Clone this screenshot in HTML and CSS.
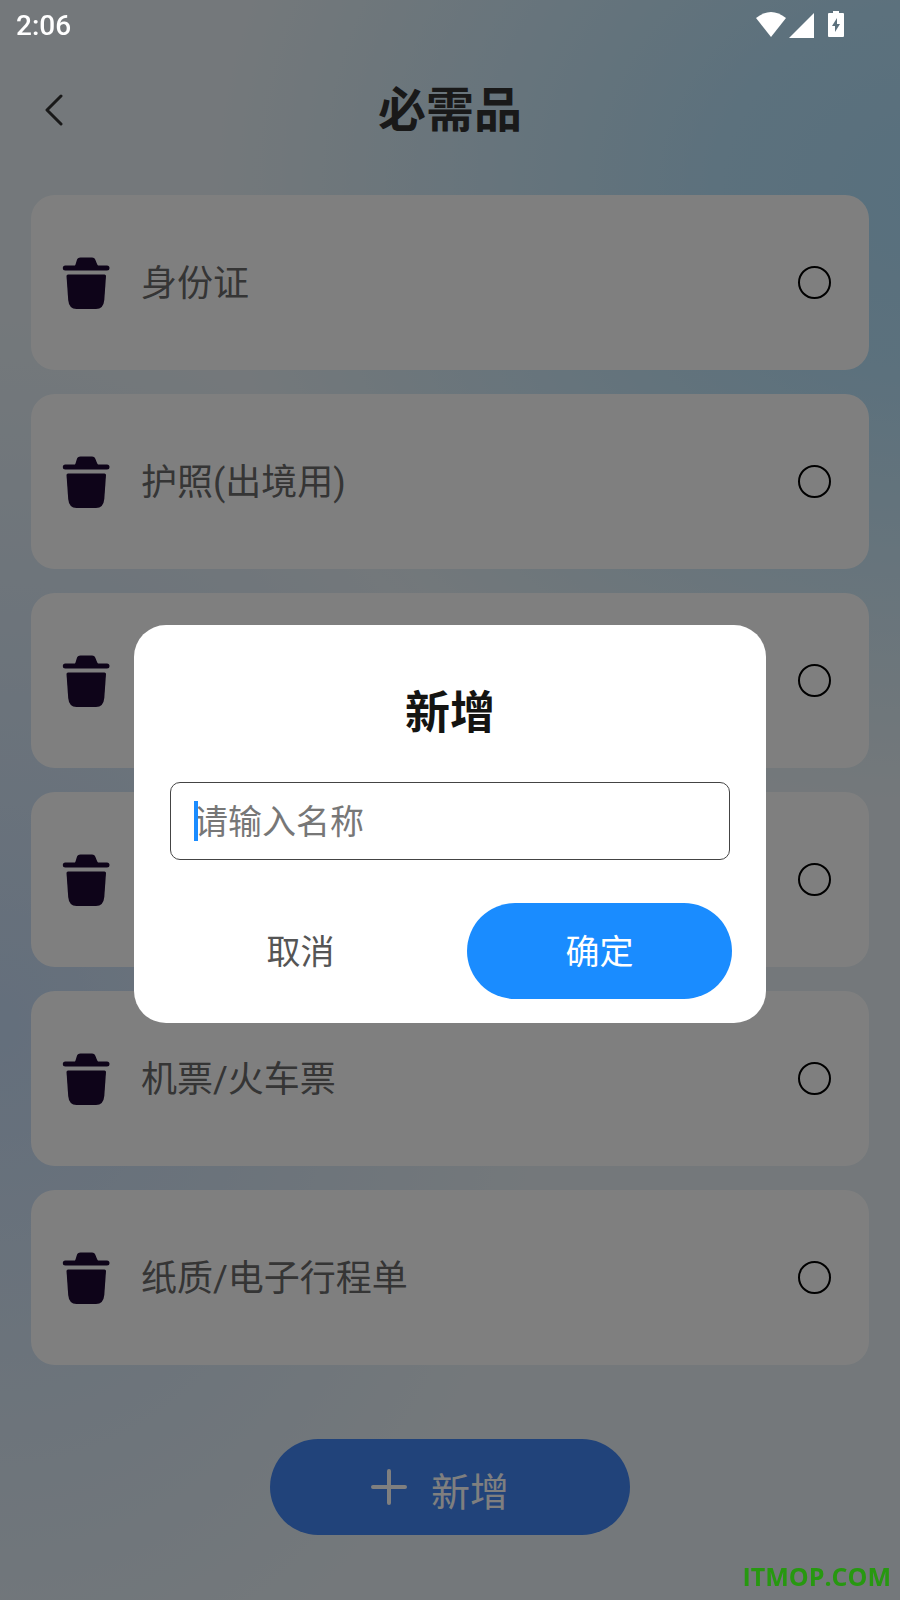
FILE: index.html
```
<!DOCTYPE html>
<html lang="zh-CN">

<head>
    <meta charset="utf-8">
    <meta name="viewport" content="width=device-width, initial-scale=1.0">
    <title>必需品</title>
    <link rel="stylesheet" href="styles.css">
</head>

<body>
    <svg width="0" height="0" class="sprite">
        <symbol id="trash" viewBox="0 0 48 52">
            <path d="M13 8.500C15 5 14 0.500 18.500 0.500H30C34 0.500 33.500 5 36 8.500H45a2.300 2.300 0 0 1 0 5H3.300a2.300 2.300 0 0 1 0-5z" />
            <path d="M6 17.500H42.500a1.500 1.500 0 0 1 1.500 1.500L42.300 43Q41.500 52 34 52H14.500Q7 52 6.200 43L4.500 19a1.500 1.500 0 0 1 1.500-1.500z" />
        </symbol>
    </svg>
    <div class="status-bar">
        <span>2:06</span>
        <svg class="status-icons" width="90" height="28" viewBox="0 0 90 28" fill="#fff">
            <path d="M0 7Q15-5 30 7L15 26z" />
            <path d="M58 2V27H33z" />
            <path fill-rule="evenodd" d="M77 0h6v2h4q1 0 1 1V25q0 1-1 1H73q-1 0-1-1V3q0-1 1-1h4zM81 7l-5 8h3v6l5-8h-3z" />
        </svg>
    </div>
    <div class="page">
        <header class="header">
            <button class="back-button" aria-label="返回">
                <svg width="18" height="32" viewBox="0 0 18 32"><path d="M16 2L2 16L16 30" /></svg>
            </button>
            <h1>必需品</h1>
        </header>
        <ul class="list">
            <li class="item">
                <button class="delete-button" aria-label="删除"><svg><use href="#trash" /></svg></button>
                <label class="item-name" for="item1">身份证</label>
                <input class="item-check" type="checkbox" id="item1">
            </li>
            <li class="item">
                <button class="delete-button" aria-label="删除"><svg><use href="#trash" /></svg></button>
                <label class="item-name" for="item2">护照(出境用)</label>
                <input class="item-check" type="checkbox" id="item2">
            </li>
            <li class="item">
                <button class="delete-button" aria-label="删除"><svg><use href="#trash" /></svg></button>
                <label class="item-name" for="item3"></label>
                <input class="item-check" type="checkbox" id="item3">
            </li>
            <li class="item">
                <button class="delete-button" aria-label="删除"><svg><use href="#trash" /></svg></button>
                <label class="item-name" for="item4"></label>
                <input class="item-check" type="checkbox" id="item4">
            </li>
            <li class="item">
                <button class="delete-button" aria-label="删除"><svg><use href="#trash" /></svg></button>
                <label class="item-name" for="item5">机票/火车票</label>
                <input class="item-check" type="checkbox" id="item5">
            </li>
            <li class="item">
                <button class="delete-button" aria-label="删除"><svg><use href="#trash" /></svg></button>
                <label class="item-name" for="item6">纸质/电子行程单</label>
                <input class="item-check" type="checkbox" id="item6">
            </li>
        </ul>
        <button class="add-button">
            <svg width="36" height="36" viewBox="0 0 36 36"><path d="M18 2V34M2 18H34" /></svg>
            <span>新增</span>
        </button>
    </div>
    <div class="overlay">
        <form class="dialog" role="dialog" aria-labelledby="dialog_title">
            <h2 id="dialog_title">新增</h2>
            <div class="name-box">
                <input class="name-input" type="text" placeholder="请输入名称" aria-label="请输入名称">
                <span class="caret"></span>
            </div>
            <div class="dialog-buttons">
                <button class="cancel-button" type="button">取消</button>
                <button class="confirm-button" type="button">确定</button>
            </div>
        </form>
    </div>
    <div class="watermark">ITMOP.COM</div>
</body>

</html>
```

FILE: styles.css
```
* {
    box-sizing: border-box;
}

body {
    margin: 0;
    min-height: 100vh;
    font-family: Roboto, "Noto Sans CJK SC", sans-serif;
    background:
        radial-gradient(ellipse 80% 38% at 104% 12%, #b0e0fc 0%, #b8e2fa 30%, rgba(200, 228, 250, 0) 100%),
        radial-gradient(ellipse 60% 44% at 0% 64%, #c8def8 0%, rgba(208, 226, 250, 0) 100%),
        #e8f1f6;
}

h1, h2, ul {
    margin: 0;
    padding: 0;
}

button {
    border: none;
    padding: 0;
    background: none;
    font-family: inherit;
    cursor: pointer;
}

.sprite {
    position: absolute;
}

.status-bar {
    position: relative;
    z-index: 2;
    display: flex;
    justify-content: space-between;
    align-items: center;
    height: 48px;
    padding: 2px 54px 0 16px;
    color: white;
    font-size: 28px;
    font-weight: 500;
}

.page {
    padding: 0 31px 65px;
}

.header {
    display: grid;
    grid-template-columns: 48px 1fr 48px;
    align-items: center;
    height: 123px;
    margin-bottom: 24px;
}

.header h1 {
    padding-top: 2px;
    color: #333;
    font-size: 48px;
    line-height: 64px;
    text-align: center;
}

.back-button {
    display: flex;
    height: 48px;
    padding: 0 14px;
    align-items: center;
}

.back-button svg {
    fill: none;
    stroke: #333;
    stroke-width: 3;
    stroke-linecap: round;
    stroke-linejoin: round;
}

.list {
    display: flex;
    flex-direction: column;
    gap: 24px;
    list-style: none;
}

.item {
    display: flex;
    align-items: center;
    gap: 31px;
    height: 175px;
    padding: 0 38px 0 31px;
    border-radius: 24px;
    background: white;
}

.delete-button,
.delete-button svg {
    display: block;
    width: 48px;
    height: 52px;
    fill: #1c0832;
}

.item-name {
    flex: 1;
    padding-top: 2px;
    color: #6a6a6a;
    font-size: 36px;
    line-height: 48px;
}

.item-check {
    appearance: none;
    width: 33px;
    height: 33px;
    margin: 0;
    border: 2px solid black;
    border-radius: 50%;
}

.add-button {
    display: flex;
    justify-content: center;
    align-items: center;
    gap: 24px;
    width: 360px;
    max-width: 100%;
    height: 96px;
    margin: 74px auto 0;
    padding-right: 20px;
    border-radius: 48px;
    background: #4286f4;
    color: white;
    font-size: 39px;
    line-height: 48px;
}

.add-button span {
    padding-top: 12px;
}

.add-button svg {
    stroke: white;
    stroke-width: 4;
    stroke-linecap: round;
}

.overlay {
    position: fixed;
    inset: 0;
    z-index: 1;
    display: flex;
    justify-content: center;
    align-items: center;
    padding: 48px 24px 0;
    background: rgba(0, 0, 0, .5);
}

.dialog {
    width: 632px;
    padding: 65px 34px 24px;
    border-radius: 32px;
    background: white;
}

.dialog h2 {
    color: #141412;
    font-size: 45px;
    line-height: 48px;
    text-align: center;
}

.name-box {
    position: relative;
    margin: 44px 2px 43px;
}

.name-input {
    display: block;
    width: 100%;
    height: 78px;
    padding: 2px 23px 0;
    border: 1px solid #444;
    border-radius: 10px;
    font-family: inherit;
    font-size: 34px;
    outline: none;
}

.name-input::placeholder {
    color: #777;
}

.caret {
    position: absolute;
    left: 24px;
    top: 19px;
    width: 4px;
    height: 40px;
    background: #1a8cff;
}

.dialog-buttons {
    display: grid;
    grid-template-columns: 1fr 1fr;
    gap: 34px;
}

.cancel-button,
.confirm-button {
    height: 96px;
    padding-bottom: 4px;
    border-radius: 48px;
    color: #555;
    font-size: 34px;
}

.confirm-button {
    background: #1a8cff;
    color: white;
}

.watermark {
    position: fixed;
    right: 9px;
    bottom: 6px;
    z-index: 2;
    color: #279810;
    font-family: "Open Sans", sans-serif;
    font-size: 25px;
    font-weight: 700;
    line-height: 36px;
}
```
